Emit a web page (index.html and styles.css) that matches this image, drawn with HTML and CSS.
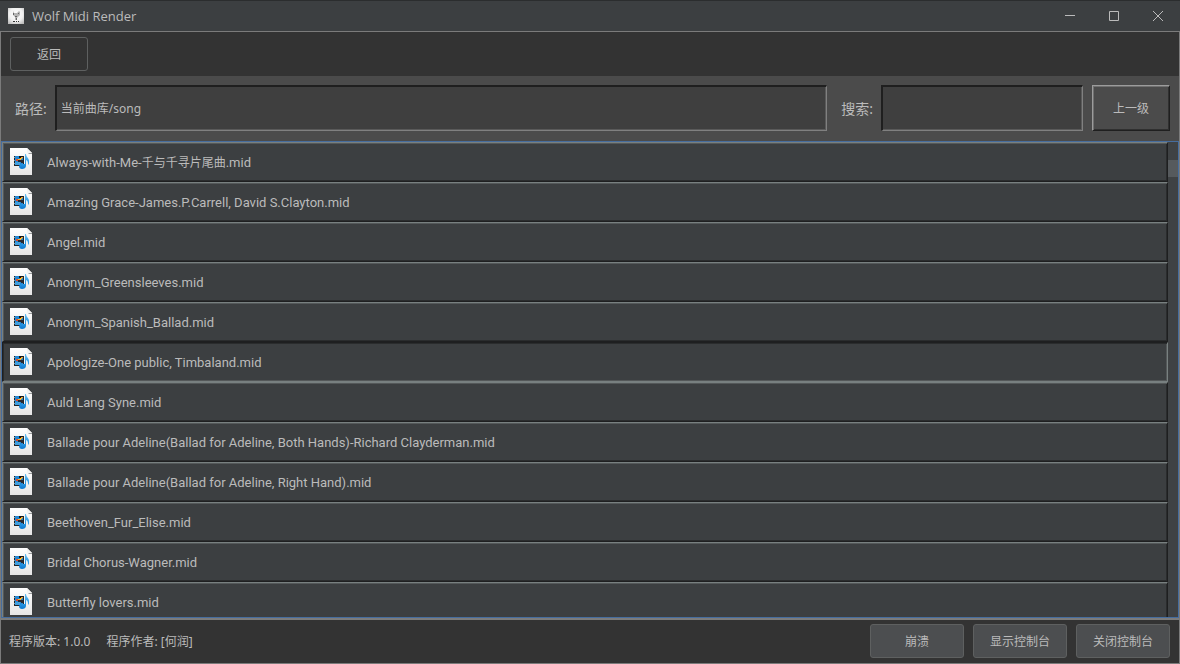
FILE: index.html
```html
<!DOCTYPE html>
<html lang="zh-CN">
<head>
<meta charset="utf-8">
<title>Wolf Midi Render</title>
<link rel="stylesheet" href="styles.css">
</head>
<body>
<svg class="defs" aria-hidden="true">
  <defs>
    <linearGradient id="paper" x1="0" y1="0" x2="0" y2="1"><stop offset="0" stop-color="#fff"/><stop offset="1" stop-color="#e6e6e6"/></linearGradient>
    <linearGradient id="note" x1="0" y1="0" x2="0" y2="1"><stop offset="0" stop-color="#6cc0f0"/><stop offset=".6" stop-color="#2f9ae4"/><stop offset="1" stop-color="#0a78d0"/></linearGradient>
    <symbol id="midi" viewBox="0 0 22 27">
      <path d="M0 0H17L22 5V27H0Z" fill="url(#paper)"/>
      <path d="M17 0V5H22Z" fill="#f4f4f4"/>
      <path d="M18 5H22V6H19Z" fill="#9a9c9d"/>
      <path d="M4 8H14V18H4Z" fill="#20262c"/>
      <path d="M4 9h1v1H4zM4 12h1v1H4zM4 15h1v1H4z" fill="#8d979e"/>
      <path d="M5 8H13V17H5Z" fill="#2488d2"/>
      <path d="M5 14h5v3H5z" fill="#3f9fe0"/>
      <path d="M9 8h4v2H9z" fill="#131619"/>
      <path d="M10 10h2v1h-2zM8 11h3v1H8z" fill="#ffb52e"/>
      <path d="M11 9h2v1h-2z" fill="#e8a540"/>
      <path d="M6 11h2v2H6z" fill="#e2472c"/>
      <path d="M8 12h5v3h-2v-1H8z" fill="#2b2a30"/>
      <path d="M15 6h1c0 3 3 4 3 7 0 2 0 3-1 4 0-3 0-4-2-5v6c0 2-2 3-4 3-1.700 0-3-1-3-2.500S10.500 16 12.500 16H15z" fill="url(#note)"/>
    </symbol>
  </defs>
</svg>
<div class="window">
  <header class="titlebar">
    <svg class="logo" viewBox="0 0 16 16" aria-hidden="true">
      <defs><radialGradient id="glow" cy=".4" r=".7"><stop offset="0" stop-color="#fff"/><stop offset=".6" stop-color="#f0f0f0"/><stop offset="1" stop-color="#bdbdbd"/></radialGradient></defs>
      <rect width="16" height="16" fill="url(#glow)"/>
      <path d="M5 3l1 2h3l2-2 1 1v3l-2 2-1 1v2H7v-3L5 7z" fill="#b4b4b4"/>
      <path d="M5 5h1v2H5zM10 5h1v1h-1zM7 8h2v1H7zM8 10h1v2H8z" fill="#666"/>
      <path d="M5 13h2v1H5zM8 13h1v1H8zM10 13h1v1h-1z" fill="#333"/>
    </svg>
    <h1 class="title">Wolf Midi Render</h1>
    <button class="win-btn" aria-label="最小化"><svg viewBox="0 0 12 12"><path d="M1 5.500H11"/></svg></button>
    <button class="win-btn" aria-label="最大化"><svg viewBox="0 0 12 12"><path d="M1.500 1.500H10.500V10.500H1.500Z"/></svg></button>
    <button class="win-btn" aria-label="关闭"><svg viewBox="0 0 12 12"><path d="M1 1L11 11M11 1L1 11"/></svg></button>
  </header>
  <main class="content">
    <div class="toolbar"><button class="btn back">返回</button></div>
    <div class="pathbar">
      <label for="path">路径:</label>
      <input class="field path" id="path" type="text" value="当前曲库/song">
      <label for="search">搜索:</label>
      <input class="field search" id="search" type="text">
      <button class="up">上一级</button>
    </div>
    <div class="browser">
      <div class="files">
        <button class="file"><svg class="icon"><use href="#midi"/></svg><span class="name">Always-with-Me-<span class="cjk">千与千寻片尾曲</span>.mid</span></button>
        <button class="file"><svg class="icon"><use href="#midi"/></svg><span class="name">Amazing Grace-James.P.Carrell, David S.Clayton.mid</span></button>
        <button class="file"><svg class="icon"><use href="#midi"/></svg><span class="name">Angel.mid</span></button>
        <button class="file"><svg class="icon"><use href="#midi"/></svg><span class="name">Anonym_Greensleeves.mid</span></button>
        <button class="file"><svg class="icon"><use href="#midi"/></svg><span class="name">Anonym_Spanish_Ballad.mid</span></button>
        <button class="file selected"><svg class="icon"><use href="#midi"/></svg><span class="name">Apologize-One public, Timbaland.mid</span></button>
        <button class="file"><svg class="icon"><use href="#midi"/></svg><span class="name">Auld Lang Syne.mid</span></button>
        <button class="file"><svg class="icon"><use href="#midi"/></svg><span class="name">Ballade pour Adeline(Ballad for Adeline, Both Hands)-Richard Clayderman.mid</span></button>
        <button class="file"><svg class="icon"><use href="#midi"/></svg><span class="name">Ballade pour Adeline(Ballad for Adeline, Right Hand).mid</span></button>
        <button class="file"><svg class="icon"><use href="#midi"/></svg><span class="name">Beethoven_Fur_Elise.mid</span></button>
        <button class="file"><svg class="icon"><use href="#midi"/></svg><span class="name">Bridal Chorus-Wagner.mid</span></button>
        <button class="file"><svg class="icon"><use href="#midi"/></svg><span class="name">Butterfly lovers.mid</span></button>
      </div>
      <div class="scrollbar"><div class="thumb"></div></div>
    </div>
    <footer class="statusbar">
      <span class="info">程序版本: 1.0.0</span>
      <span class="info author">程序作者: [何润]</span>
      <button class="btn filled">崩溃</button>
      <button class="btn filled">显示控制台</button>
      <button class="btn filled">关闭控制台</button>
    </footer>
  </main>
</div>
</body>
</html>
```
FILE: styles.css
```css
* { box-sizing: border-box; }
body {
  margin: 0;
  background: #333;
  color: #bbb;
  font: 12px/20px "Noto Sans", "Noto Sans CJK SC", sans-serif;
}
button, input { font: inherit; color: inherit; margin: 0; }
.defs { position: absolute; width: 0; height: 0; }
.cjk { font-size: 12px; }
.window { height: 100vh; display: flex; flex-direction: column; }

.titlebar {
  display: flex;
  align-items: center;
  flex: none;
  height: 31px;
  padding-left: 8px;
  background: #3c3f41;
  border-top: 1px solid #2b2d2e;
}
.logo { width: 16px; height: 16px; margin-right: 8px; }
.title { flex: 1; margin: 0; font-family: "Open Sans", sans-serif; font-size: 13px; font-weight: 400; }
.win-btn {
  display: grid;
  place-items: center;
  width: 44px;
  height: 30px;
  padding: 0;
  border: 0;
  background: none;
}
.win-btn svg { width: 12px; height: 12px; fill: none; stroke: #bbb; }

.content {
  flex: 1;
  min-height: 0;
  display: flex;
  flex-direction: column;
  border: 1px solid #7b7b7b;
}
.toolbar { flex: none; padding: 5px 9px; background: #333; }
.btn {
  height: 34px;
  padding: 2px 0 0;
  border: 1px solid #5e6060;
  border-radius: 3px;
  background: none;
}
.back { display: block; width: 78px; }

.pathbar {
  flex: none;
  display: flex;
  align-items: center;
  padding: 9px 9px 10px 14px;
  background: #4b4b4b;
}
.pathbar label { padding-top: 2px; font-size: 14px; }
.field {
  min-width: 0;
  height: 46px;
  padding: 0 4px 2px;
  border: 2px solid;
  border-width: 2px 1px 1px 2px;
  border-color: #1f1f1f #808080 #808080 #1f1f1f;
  box-shadow: inset -1px -1px #5a5a5a;
  background: #3f3f3f;
}
.path { flex: 1; margin: 0 14px 0 8px; }
.search { width: 202px; margin: 0 9px 0 8px; }
.up {
  width: 78px;
  height: 46px;
  padding: 2px 0 0;
  border: 1px solid;
  border-color: #9c9c9c #1f1f1f #1f1f1f #9c9c9c;
  box-shadow: inset 1px 1px #707070, inset -1px -1px #303030;
  background: #4b4b4b;
}

.browser {
  flex: 1;
  min-height: 0;
  display: flex;
  border: 1px solid #466d9e;
}
.files { flex: 1; min-width: 0; overflow: hidden; background: #3c3f41; }
.file {
  display: flex;
  align-items: center;
  gap: 15px;
  width: 100%;
  height: 40px;
  padding: 0 7px;
  border: 1px solid;
  border-color: #788080 #1e1f20 #1e1f20 #788080;
  background: #3c3f41;
  box-shadow: inset 1px 1px #545859, inset -1px -1px #2a2c2d;
  font-family: Roboto, "Noto Sans CJK SC", sans-serif;
  font-size: 13px;
  text-align: left;
  white-space: nowrap;
}
.selected {
  border-color: #1e1f20 #788080 #788080 #1e1f20;
  box-shadow: inset 1px 1px #2a2c2d, inset -1px -1px #545859;
}
.icon { flex: none; width: 22px; height: 27px; margin-bottom: 1px; }
.name { padding-top: 2px; }
.scrollbar { flex: none; width: 10px; padding-top: 18px; background: #3f4244; }
.thumb { height: 17px; background: #565a5d; }

.statusbar {
  flex: none;
  display: flex;
  align-items: center;
  gap: 9px;
  padding: 4px 9px 5px 8px;
  border-top: 2px solid #7b7b7b;
  background: #333;
}
.info { padding-top: 2px; }
.author { flex: 1; padding-left: 7px; }
.filled { width: 94px; background: #4c4e50; }
```
